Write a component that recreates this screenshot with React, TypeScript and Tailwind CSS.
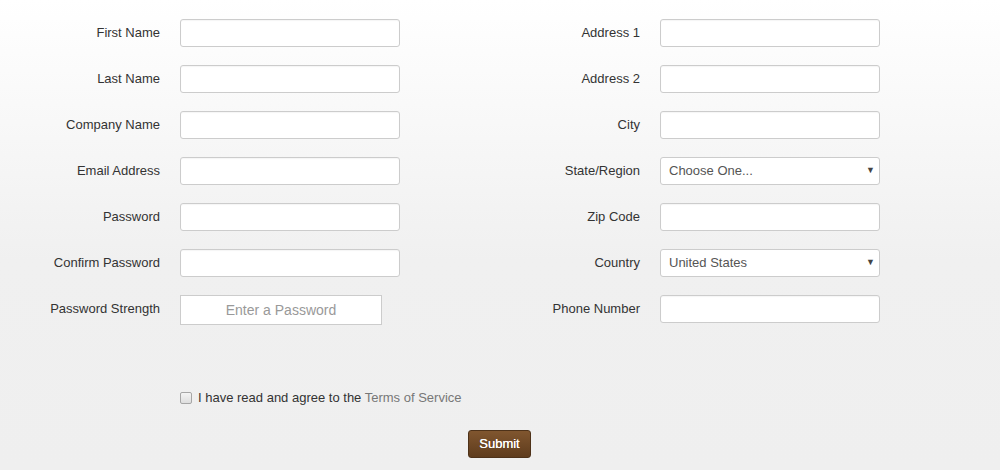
import React from 'react';

const leftFields = ['First Name', 'Last Name', 'Company Name', 'Email Address', 'Password', 'Confirm Password'];

function Row({ label, children }: { label: string; children: React.ReactNode }) {
  return (
    <div className="flex items-center h-[28px] mb-[18px]">
      <label className="w-[160px] text-right text-[13px] text-[#333] pr-0">{label}</label>
      <div className="ml-[20px] w-[220px]">{children}</div>
    </div>
  );
}

function TextInput({ type = 'text' }: { type?: string }) {
  return (
    <input
      type={type}
      className="block w-[220px] h-[28px] px-2 bg-white border border-[#cccccc] rounded-[3px] text-[13px] text-[#555] outline-none shadow-[inset_0_1px_1px_rgba(0,0,0,0.04)]"
    />
  );
}

function Select({ value }: { value: string }) {
  return (
    <div className="relative w-[220px] h-[28px]">
      <select
        defaultValue={value}
        className="appearance-none block w-full h-full pl-2 pr-6 bg-white border border-[#cccccc] rounded-[3px] text-[13px] text-[#555] outline-none"
      >
        <option>{value}</option>
      </select>
      <span className="pointer-events-none absolute right-[5px] top-[9px] text-[9px] leading-none text-[#444]">▼</span>
    </div>
  );
}

export default function App() {
  return (
    <div
      className="w-[1000px] h-[470px] overflow-hidden bg-[linear-gradient(to_bottom,#ffffff_0px,#f0f0f0_260px,#efefef_470px)] pt-[19px]"
      style={{ fontFamily: '"Liberation Sans", Arial, sans-serif' }}
    >
      <div className="grid grid-cols-[480px_480px]">
        <div>
          {leftFields.map((f) => (
            <Row key={f} label={f}>
              <TextInput type={f.includes('Password') ? 'password' : 'text'} />
            </Row>
          ))}
          <div className="flex items-center h-[30px]">
            <label className="w-[160px] text-right text-[13px] text-[#333] pb-[2px]">Password Strength</label>
            <div className="ml-[20px] w-[202px] h-[30px] flex items-center justify-center bg-white border border-[#cccccc] text-[14px] text-[#999]">
              Enter a Password
            </div>
          </div>
        </div>
        <div>
          <Row label="Address 1"><TextInput /></Row>
          <Row label="Address 2"><TextInput /></Row>
          <Row label="City"><TextInput /></Row>
          <Row label="State/Region"><Select value="Choose One..." /></Row>
          <Row label="Zip Code"><TextInput /></Row>
          <Row label="Country"><Select value="United States" /></Row>
          <Row label="Phone Number"><TextInput /></Row>
        </div>
      </div>

      <div className="mt-[47px] ml-[180px] flex items-center h-[20px]">
        <input
          type="checkbox"
          className="appearance-none w-[12px] h-[12px] border border-[#a6a6a6] rounded-[2px] bg-[linear-gradient(to_bottom,#f4f4f4,#dedede)]"
        />
        <span className="ml-[6px] text-[13px] text-[#333]">
          I have read and agree to the <a className="text-[#777]">Terms of Service</a>
        </span>
      </div>

      <div className="mt-[22px] flex justify-center">
        <button className="ml-[-1px] w-[63px] h-[28px] rounded-[3px] border border-[#4e3219] bg-[linear-gradient(to_bottom,#80562f,#5f3c1d)] text-white text-[13px] [text-shadow:0_0_0.6px_#fff]">
          Submit
        </button>
      </div>
    </div>
  );
}
